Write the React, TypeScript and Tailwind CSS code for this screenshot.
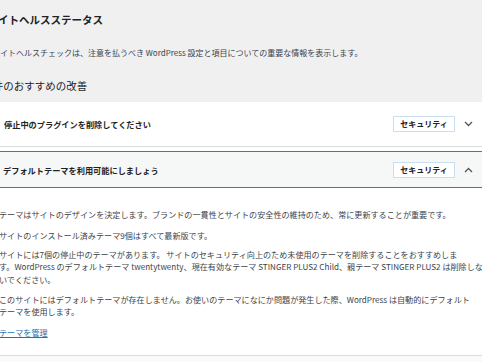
import React from 'react';

const font = { fontFamily: '"Noto Sans CJK JP", "Noto Sans", sans-serif' };

const Chevron = ({ up = false }: { up?: boolean }) => (
  <svg width="9" height="6" viewBox="0 0 9 6" className="shrink-0">
    <path
      d={up ? 'M1 5l3.5-3.5L8 5' : 'M1 1l3.5 3.5L8 1'}
      fill="none"
      stroke="#50575e"
      strokeWidth="1.3"
    />
  </svg>
);

const Badge = () => (
  <span className="flex h-[16px] w-[62px] items-center justify-center border border-[#c9def0] bg-white text-[8px] font-bold leading-none text-[#1d2327]">
    セキュリティ
  </span>
);

const App = () => {
  return (
    <div className="min-h-screen w-full overflow-hidden bg-[#fafafa]" style={font}>
      <div className="h-[102px] bg-[#f0f0f1] pt-[13px]">
        <h1 className="ml-[-12.5px] whitespace-nowrap text-[10.5px] font-bold leading-[14px] text-[#1d2327]">
          サイトヘルスステータス
        </h1>
        <p className="ml-[-8px] mt-[20px] whitespace-nowrap text-[8px] leading-[12px] text-[#3c434a]">
          サイトヘルスチェックは、注意を払うべき WordPress 設定と項目についての重要な情報を表示します。
        </p>
        <h2 className="ml-[-13px] mt-[20px] whitespace-nowrap text-[10.5px] font-normal leading-[14px] text-[#1d2327]">
          2件のおすすめの改善
        </h2>
      </div>

      <div className="flex h-[45px] items-center border-b border-[#dcdcde] bg-white pl-[4px]">
        <span className="flex-1 text-[8.2px] font-semibold text-[#1d2327]">停止中のプラグインを削除してください</span>
        <Badge />
        <span className="flex w-[27px] justify-center">
          <Chevron />
        </span>
      </div>

      <div className="bg-white pt-[4px]">
        <div className="flex h-[37px] items-center border-y border-[#2f7fba] bg-[#f6f7f7] pl-[3px]">
          <span className="flex-1 pt-[2px] text-[8.2px] font-semibold text-[#1d2327]">デフォルトテーマを利用可能にしましょう</span>
          <Badge />
          <span className="flex w-[27px] justify-center">
            <Chevron up />
          </span>
        </div>
      </div>

      <div className="ml-[-1px] w-[484px] border-b border-[#dcdcde] bg-white pb-[16px] pt-[21px] text-[8.1px] leading-[12.3px] text-[#3c434a]">
        <p>テーマはサイトのデザインを決定します。ブランドの一貫性とサイトの安全性の維持のため、常に更新することが重要です。</p>
        <p className="mt-[8.5px]">サイトのインストール済みテーマ9個はすべて最新版です。</p>
        <p className="mt-[7px] whitespace-nowrap">
          サイトには7個の停止中のテーマがあります。 サイトのセキュリティ向上のため未使用のテーマを削除することをおすすめしま
          <br />
          す。WordPress のデフォルトテーマ twentytwenty、現在有効なテーマ STINGER PLUS2 Child、親テーマ STINGER PLUS2 は削除しな
          <br />
          いでください。
        </p>
        <p className="mt-[8px] whitespace-nowrap">
          このサイトにはデフォルトテーマが存在しません。お使いのテーマになにか問題が発生した際、WordPress は自動的にデフォルト
          <br />
          テーマを使用します。
        </p>
        <p className="mt-[8px]">
          <a href="#" className="text-[#2271b1] underline">テーマを管理</a>
        </p>
      </div>
    </div>
  );
};

export default App;
